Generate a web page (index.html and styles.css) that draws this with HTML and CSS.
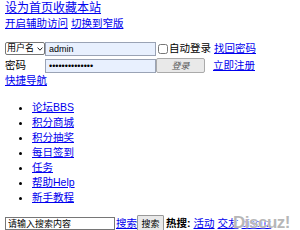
FILE: index.html
```html
<!DOCTYPE html>
<html>
<head>
<meta charset="utf-8">
<link rel="stylesheet" href="styles.css">
</head>
<body>
<div class="top">
  <div class="line first"><a href="#">设为首页</a><a href="#">收藏本站</a></div>
  <div class="line"><a href="#">开启辅助访问</a> <a href="#">切换到窄版</a></div>
</div>
<form class="login">
  <div class="row">
    <span class="selwrap">
      <select class="sel"><option>用户名</option></select>
      <svg class="arrow" width="6" height="4" viewBox="0 0 6 4"><path d="M0.6 0.6 L3 3.2 L5.4 0.6" fill="none" stroke="#222" stroke-width="1"/></svg>
    </span>
    <input class="field" type="text" value="admin">
    <label class="auto"><input type="checkbox" class="chk">自动登录</label>
    <a href="#" class="rlink">找回密码</a>
  </div>
  <div class="row">
    <span class="lbl">密码</span>
    <input class="field pw" type="password" value="12345678901234">
    <button type="button" class="btn">登录</button>
    <a href="#" class="rlink reg">立即注册</a>
  </div>
</form>
<div class="line"><a href="#">快捷导航</a></div>
<ul class="nav">
  <li><a href="#">论坛BBS</a></li>
  <li><a href="#">积分商城</a></li>
  <li><a href="#">积分抽奖</a></li>
  <li><a href="#">每日签到</a></li>
  <li><a href="#">任务</a></li>
  <li><a href="#">帮助Help</a></li>
  <li><a href="#">新手教程</a></li>
</ul>
<div class="search">
  <input class="sfield" type="text" value="请输入搜索内容">
  <a href="#">搜索</a><button type="button" class="sbtn">搜索</button>
  <strong class="hot">热搜:</strong>
  <a href="#">活动</a> <a href="#">交友</a> <a href="#">discuz</a>
</div>
<div class="logo">Discuz!</div>
</body>
</html>
```
FILE: styles.css
```css
html, body {
  margin: 0;
  padding: 0;
}
body {
  padding: 1px 5px 0;
  font: 10.5px/15px "Liberation Sans", "Noto Sans CJK SC", sans-serif;
  color: #000;
  background: #fff;
  overflow: hidden;
  height: 229px;
  position: relative;
}
a {
  color: #0000ee;
}
.line {
  height: 15px;
  white-space: nowrap;
}
.first {
  font-size: 12px;
}
.login {
  margin: 10px 0 0;
}
.row {
  display: flex;
  align-items: center;
  height: 15px;
  white-space: nowrap;
}
.row + .row {
  margin-top: 2px;
}
.selwrap {
  display: flex;
  align-items: center;
}
.sel {
  -webkit-appearance: none;
  appearance: none;
  width: 40px;
  height: 13px;
  margin: 0;
  padding: 0 0 0 1px;
  font: 9px/11px "Liberation Sans", "Noto Sans CJK SC", sans-serif;
  color: #000;
  border: 1px solid #767676;
  border-radius: 2px;
  background: #fff;
  box-sizing: border-box;
}
.arrow {
  margin-left: -8px;
  margin-right: 2px;
  pointer-events: none;
}
.lbl {
  width: 40px;
}
.field {
  width: 111px;
  height: 14px;
  margin: 0;
  padding: 0 3px;
  box-sizing: border-box;
  border: 1px solid #9aa3b5;
  background: #e8f0fe;
  font: 9px "Liberation Sans", "Noto Sans CJK SC", sans-serif;
}
.auto {
  display: flex;
  align-items: center;
}
.chk {
  width: 10px;
  height: 10px;
  margin: 0 1px 0 2px;
}
.rlink {
  margin-left: 3px;
}
.btn {
  width: 49px;
  height: 15px;
  margin: 0;
  padding: 0;
  font: italic 9px "Liberation Sans", "Noto Sans CJK SC", sans-serif;
  color: #555;
  background: #e9e9e9;
  border: 1px solid #aaa;
  border-radius: 2px;
}
.reg {
  margin-left: 8px;
}
.nav {
  margin: 12px 0 0;
  padding-left: 27px;
}
.nav li {
  height: 15px;
}
.search {
  margin-top: 11px;
  display: flex;
  align-items: center;
  height: 15px;
  white-space: nowrap;
}
.sfield {
  width: 110px;
  height: 13px;
  margin: 0 1px 0 0;
  padding: 0 2px;
  box-sizing: border-box;
  border: 1px solid #767676;
  font: 9px "Liberation Sans", "Noto Sans CJK SC", sans-serif;
  color: #000;
}
.sbtn {
  width: 27px;
  height: 17px;
  margin: 0 2px 0 0;
  padding: 0;
  font: 9px "Liberation Sans", "Noto Sans CJK SC", sans-serif;
  background: #e9e9e9;
  border: 1px solid #999;
  border-radius: 1px;
}
.hot {
  margin-right: 3px;
}
.search a + a {
  margin-left: 3px;
}
.logo {
  position: absolute;
  right: 10px;
  bottom: -3px;
  font: bold 17px "Liberation Sans", sans-serif;
  color: rgba(160, 160, 160, 0.75);
  text-shadow: 0 0 1px #fff, 0 0 2px #fff;
  letter-spacing: -0.5px;
}
```
